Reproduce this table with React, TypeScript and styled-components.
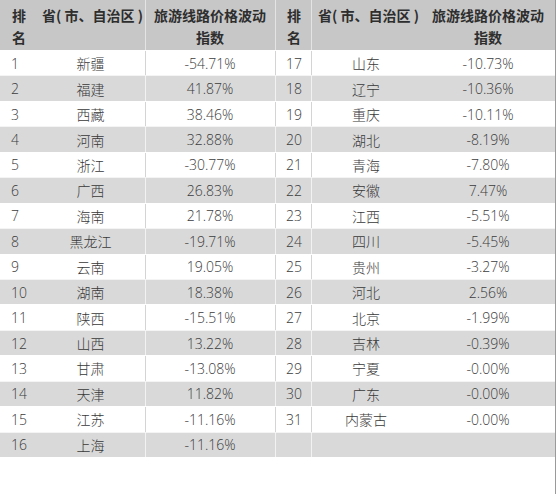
import React from "react";
import styled, { createGlobalStyle } from "styled-components";

const GlobalStyle = createGlobalStyle`
  html, body { margin: 0; padding: 0; background: #ffffff; }
  body { font-family: "Open Sans", "Noto Sans CJK SC", sans-serif; }
`;

type Row = [string, string, string];

const data: Row[] = [
  ["1", "新疆", "-54.71%"],
  ["2", "福建", "41.87%"],
  ["3", "西藏", "38.46%"],
  ["4", "河南", "32.88%"],
  ["5", "浙江", "-30.77%"],
  ["6", "广西", "26.83%"],
  ["7", "海南", "21.78%"],
  ["8", "黑龙江", "-19.71%"],
  ["9", "云南", "19.05%"],
  ["10", "湖南", "18.38%"],
  ["11", "陕西", "-15.51%"],
  ["12", "山西", "13.22%"],
  ["13", "甘肃", "-13.08%"],
  ["14", "天津", "11.82%"],
  ["15", "江苏", "-11.16%"],
  ["16", "上海", "-11.16%"],
  ["17", "山东", "-10.73%"],
  ["18", "辽宁", "-10.36%"],
  ["19", "重庆", "-10.11%"],
  ["20", "湖北", "-8.19%"],
  ["21", "青海", "-7.80%"],
  ["22", "安徽", "7.47%"],
  ["23", "江西", "-5.51%"],
  ["24", "四川", "-5.45%"],
  ["25", "贵州", "-3.27%"],
  ["26", "河北", "2.56%"],
  ["27", "北京", "-1.99%"],
  ["28", "吉林", "-0.39%"],
  ["29", "宁夏", "-0.00%"],
  ["30", "广东", "-0.00%"],
  ["31", "内蒙古", "-0.00%"],
];

const Page = styled.div`
  width: 556px;
  min-height: 494px;
  box-sizing: border-box;
  border-right: 1px solid #9a9a9a;
  background: #ffffff;
`;

const Table = styled.div`
  display: grid;
  grid-template-columns: 36px 109px 130px 36px 110px 1fr;
  grid-template-rows: 50px;
  grid-auto-rows: 25.44px;
`;

type Align = "left" | "center";

const HeadCell = styled.div<{ $align: Align; $sep?: boolean; $pad?: number }>`
  background: #c7c7c7;
  color: #2e2e2e;
  font-family: "Noto Sans CJK SC", "Open Sans", sans-serif;
  font-weight: 700;
  font-size: 14px;
  line-height: 22px;
  padding: 4px 0 0 ${(p) => p.$pad ?? 0}px;
  text-align: ${(p) => p.$align};
  white-space: nowrap;
  overflow: visible;
  box-shadow: ${(p) => (p.$sep ? "inset 1px 0 0 #e4e4e4" : "none")};
  box-sizing: border-box;
  position: relative;
  z-index: 1;
`;

const Cell = styled.div<{ $shade: boolean; $align: Align; $sep?: boolean }>`
  background: ${(p) => (p.$shade ? "#d9d9d9" : "#ffffff")};
  color: #3c3c3c;
  font-family: "Open Sans", "Noto Sans CJK SC", sans-serif;
  font-weight: 300;
  font-size: 14px;
  display: flex;
  align-items: center;
  justify-content: ${(p) => (p.$align === "left" ? "flex-start" : "center")};
  padding-left: ${(p) => (p.$align === "left" ? "11px" : "0")};
  box-sizing: border-box;
  white-space: nowrap;
  box-shadow: ${(p) =>
    p.$sep ? (p.$shade ? "inset 1px 0 0 #f2f2f2" : "inset 1px 0 0 #d4d4d4") : "none"};
  border-top: 1px solid ${(p) => (p.$shade ? "#f4f4f4" : "#ffffff")};
`;

const Name = styled.span`
  font-family: "Noto Sans CJK SC", sans-serif;
  font-weight: 300;
  color: #383838;
`;

function Header() {
  return (
    <>
      <HeadCell $align="left" $pad={12}>
        排<br />名
      </HeadCell>
      <HeadCell $align="left" $pad={6}>
        省( 市、自治区 )
      </HeadCell>
      <HeadCell $align="center" $sep>
        旅游线路价格波动
        <br />
        指数
      </HeadCell>
      <HeadCell $align="left" $sep $pad={12}>
        排<br />名
      </HeadCell>
      <HeadCell $align="left" $sep $pad={7}>
        省( 市、自治区 )
      </HeadCell>
      <HeadCell $align="center">
        旅游线路价格波动
        <br />
        指数
      </HeadCell>
    </>
  );
}

function Half({ row, shade, first }: { row?: Row; shade: boolean; first: boolean }) {
  return (
    <>
      <Cell $shade={shade} $align="left" $sep={!first}>
        {row ? row[0] : ""}
      </Cell>
      <Cell $shade={shade} $align="center" $sep={!first}>
        {row ? <Name>{row[1]}</Name> : ""}
      </Cell>
      <Cell $shade={shade} $align="center" $sep={first}>
        {row ? row[2] : ""}
      </Cell>
    </>
  );
}

export default function App() {
  const rows = Array.from({ length: 16 }, (_, i) => i);
  return (
    <Page>
      <GlobalStyle />
      <Table>
        <Header />
        {rows.map((i) => {
          const shade = i % 2 === 1;
          return (
            <React.Fragment key={i}>
              <Half row={data[i]} shade={shade} first />
              <Half row={data[i + 16]} shade={shade} first={false} />
            </React.Fragment>
          );
        })}
      </Table>
    </Page>
  );
}
